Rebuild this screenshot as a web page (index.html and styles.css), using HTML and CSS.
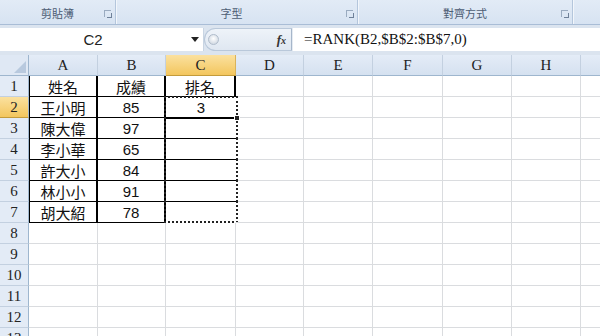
FILE: index.html
```html
<!DOCTYPE html>
<html>
<head>
<meta charset="utf-8">
<link rel="stylesheet" href="styles.css">
</head>
<body>
<div class="ribbon">
  <div class="group g1"><span class="glabel">剪貼簿</span><span class="launch"></span></div>
  <div class="group g2"><span class="glabel">字型</span><span class="launch"></span></div>
  <div class="group g3"><span class="glabel">對齊方式</span><span class="launch"></span></div>
  <div class="group g4"></div>
</div>
<div class="fbar">
  <div class="namebox"><span class="name">C2</span></div>
  <div class="dropdown"><svg width="8" height="5" viewBox="0 0 8 5"><path d="M0 0H8L4 5Z" fill="#222"/></svg></div>
  <div class="pill">
    <span class="grip"></span>
    <span class="fx">f<i>x</i></span>
  </div>
  <div class="formula">=RANK(B2,$B$2:$B$7,0)</div>
</div>
<div class="sheet">
  <div class="corner"><svg width="12" height="12" viewBox="0 0 12 12"><path d="M12 0V12H0Z" fill="#b8c9de"/></svg></div>
  <div class="ch">A</div><div class="ch">B</div><div class="ch sel">C</div><div class="ch">D</div><div class="ch">E</div><div class="ch">F</div><div class="ch">G</div><div class="ch">H</div><div class="ch last"></div>

  <div class="rh">1</div>
  <div class="c l b r2 cjk">姓名</div><div class="c b r2 cjk">成績</div><div class="c b r2 cjk">排名</div><div class="c"></div><div class="c"></div><div class="c"></div><div class="c"></div><div class="c"></div><div class="c last"></div>

  <div class="rh sel">2</div>
  <div class="c l b r2 cjk">王小明</div><div class="c b r2 num">85</div><div class="c num ants-top active">3<span class="handle"></span></div><div class="c"></div><div class="c"></div><div class="c"></div><div class="c"></div><div class="c"></div><div class="c last"></div>

  <div class="rh">3</div>
  <div class="c l b r2 cjk">陳大偉</div><div class="c b r2 num">97</div><div class="c ants-mid"></div><div class="c"></div><div class="c"></div><div class="c"></div><div class="c"></div><div class="c"></div><div class="c last"></div>

  <div class="rh">4</div>
  <div class="c l b r2 cjk">李小華</div><div class="c b r2 num">65</div><div class="c ants-mid"></div><div class="c"></div><div class="c"></div><div class="c"></div><div class="c"></div><div class="c"></div><div class="c last"></div>

  <div class="rh">5</div>
  <div class="c l b r2 cjk">許大小</div><div class="c b r2 num">84</div><div class="c ants-mid"></div><div class="c"></div><div class="c"></div><div class="c"></div><div class="c"></div><div class="c"></div><div class="c last"></div>

  <div class="rh">6</div>
  <div class="c l b r2 cjk">林小小</div><div class="c b r2 num">91</div><div class="c ants-mid"></div><div class="c"></div><div class="c"></div><div class="c"></div><div class="c"></div><div class="c"></div><div class="c last"></div>

  <div class="rh">7</div>
  <div class="c l b r2 cjk">胡大紹</div><div class="c b r2 num">78</div><div class="c ants-bot"></div><div class="c"></div><div class="c"></div><div class="c"></div><div class="c"></div><div class="c"></div><div class="c last"></div>

  <div class="rh">8</div>
  <div class="c"></div><div class="c"></div><div class="c"></div><div class="c"></div><div class="c"></div><div class="c"></div><div class="c"></div><div class="c"></div><div class="c last"></div>
  <div class="rh">9</div>
  <div class="c"></div><div class="c"></div><div class="c"></div><div class="c"></div><div class="c"></div><div class="c"></div><div class="c"></div><div class="c"></div><div class="c last"></div>
  <div class="rh">10</div>
  <div class="c"></div><div class="c"></div><div class="c"></div><div class="c"></div><div class="c"></div><div class="c"></div><div class="c"></div><div class="c"></div><div class="c last"></div>
  <div class="rh">11</div>
  <div class="c"></div><div class="c"></div><div class="c"></div><div class="c"></div><div class="c"></div><div class="c"></div><div class="c"></div><div class="c"></div><div class="c last"></div>
  <div class="rh">12</div>
  <div class="c"></div><div class="c"></div><div class="c"></div><div class="c"></div><div class="c"></div><div class="c"></div><div class="c"></div><div class="c"></div><div class="c last"></div>
  <div class="rh">13</div>
  <div class="c"></div><div class="c"></div><div class="c"></div><div class="c"></div><div class="c"></div><div class="c"></div><div class="c"></div><div class="c"></div><div class="c last"></div>
</div>
</body>
</html>
```
FILE: styles.css
```css
* { box-sizing: border-box; }
html, body { margin: 0; padding: 0; }
body {
  width: 600px;
  height: 336px;
  overflow: hidden;
  background: #fff;
  font-family: "Liberation Serif", "Noto Sans CJK TC", serif;
}

.ribbon {
  display: flex;
  height: 25px;
  background: linear-gradient(#e2ebf6, #d7e3f2);
  border-bottom: 1px solid #a9bdd6;
}
.group {
  position: relative;
  display: flex;
  align-items: center;
  justify-content: center;
  border-right: 1px solid #b4c6dc;
  box-shadow: 1px 0 0 #f2f6fb;
}
.g1 { width: 116px; }
.g2 { width: 242px; }
.g3 { width: 215px; }
.g4 { flex: 1; border-right: none; box-shadow: none; }
.g2 .glabel { margin-right: 10px; }
.glabel {
  font-family: "Noto Sans CJK TC", sans-serif;
  font-size: 11px;
  color: #4d5d74;
  line-height: 14px;
  padding-top: 2px;
}
.launch {
  position: absolute;
  right: 4px;
  top: 10px;
  width: 7px;
  height: 7px;
  border-top: 1px solid #9aabc0;
  border-left: 1px solid #9aabc0;
}
.launch::after {
  content: "";
  position: absolute;
  right: -1px;
  bottom: -1px;
  width: 4px;
  height: 4px;
  border-right: 1px solid #6f8199;
  border-bottom: 1px solid #6f8199;
}

.fbar {
  display: flex;
  height: 30px;
  padding: 3px 0 4px;
  background: #dbe4ef;
}
.namebox {
  width: 186px;
  background: #fff;
  display: flex;
  align-items: center;
  justify-content: center;
}
.name {
  font-family: "Liberation Sans", sans-serif;
  font-size: 15px;
  color: #222;
}
.dropdown {
  width: 18px;
  background: #fff;
  display: flex;
  align-items: center;
  justify-content: center;
  border-right: 1px solid #c9d5e3;
}
.pill {
  width: 88px;
  display: flex;
  align-items: center;
  justify-content: space-between;
  padding: 0 5px 0 3px;
  background: linear-gradient(#eef3f9, #dfe7f1);
  border: 1px solid #b9c8da;
  border-radius: 12px 0 0 12px;
  border-right: 1px solid #a6b6ca;
}
.grip {
  width: 11px;
  height: 11px;
  border-radius: 50%;
  background: radial-gradient(circle at 50% 40%, #ffffff, #c5cfdb);
  border: 1px solid #b0bccb;
}
.fx {
  font-family: "Liberation Serif", serif;
  font-style: italic;
  font-weight: bold;
  font-size: 13px;
  color: #333;
}
.fx i { font-size: 10px; }
.formula {
  flex: 1;
  background: #fff;
  font-family: "Liberation Serif", serif;
  font-size: 15px;
  line-height: 23px;
  padding-left: 11px;
  color: #111;
  border-left: 1px solid #e5ebf2;
}

.sheet {
  display: grid;
  grid-template-columns: 29px 69px 68px 70px 68px 69px 70px 69px 69px 1fr;
  grid-auto-rows: 21px;
}
.corner {
  background: #dfe8f4;
  border-right: 1px solid #9eb6ce;
  border-bottom: 1px solid #9eb6ce;
  display: flex;
  align-items: flex-end;
  justify-content: flex-end;
  padding: 0 2px 2px 0;
}
.ch {
  background: linear-gradient(#e4ecf7, #d5e1f0);
  border-right: 1px solid #c3d0e0;
  border-bottom: 1px solid #9eb6ce;
  text-align: center;
  font-size: 15px;
  line-height: 20px;
  color: #222;
}
.ch.sel {
  background: linear-gradient(#fbe19f, #f3c65e);
  border-bottom-color: #c39b3b;
  border-right-color: #d9b35b;
}
.ch.last { border-right: none; }
.rh {
  background: #e3ebf6;
  border-right: 1px solid #9eb6ce;
  border-bottom: 1px solid #c3d0e0;
  text-align: center;
  font-size: 15px;
  line-height: 21px;
  color: #222;
}
.rh.sel {
  background: linear-gradient(#fbe19f, #f3c65e);
  border-bottom-color: #c39b3b;
}
.c {
  position: relative;
  border-right: 1px solid #dadcdf;
  border-bottom: 1px solid #dadcdf;
  text-align: center;
  font-size: 15px;
  line-height: 21px;
  color: #111;
}
.c.last { border-right: none; }
.c.b { border-bottom: 1px solid #000; }
.c.r2 { border-right: 2px solid #000; }
.c.l { border-left: 1px solid #000; }
.cjk { font-family: "Noto Sans CJK TC", sans-serif; }
.num { font-family: "Liberation Sans", sans-serif; }

.ants-top, .ants-mid, .ants-bot {
  border-right: none;
  border-bottom: none;
}
.ants-top::before, .ants-mid::before, .ants-bot::before {
  content: "";
  position: absolute;
  inset: -1px -2px -1px -2px;
  border-left: 2px dotted #222;
  border-right: 2px dotted #222;
  pointer-events: none;
}
.ants-top::before { border-top: 2px dotted #222; }
.ants-bot::before { border-bottom: 2px dotted #222; bottom: 0; }
.ants-mid { border-bottom: 1px solid #000; }
.active::after {
  content: "";
  position: absolute;
  left: -1px;
  right: -1px;
  bottom: -1px;
  height: 2px;
  background: #000;
}
.handle {
  position: absolute;
  right: -4px;
  bottom: -3px;
  width: 6px;
  height: 6px;
  background: #222;
  border: 1px solid #fff;
  z-index: 2;
}
```
